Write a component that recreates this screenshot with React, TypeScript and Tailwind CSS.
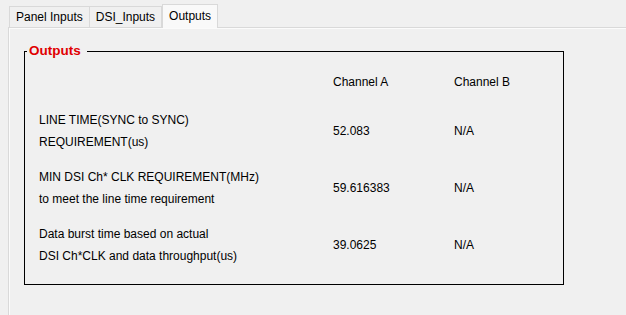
import React from "react";

const rows = [
  {
    label: ["LINE TIME(SYNC to SYNC)", "REQUIREMENT(us)"],
    a: "52.083",
    b: "N/A",
  },
  {
    label: ["MIN DSI Ch* CLK REQUIREMENT(MHz)", "to meet the line time requirement"],
    a: "59.616383",
    b: "N/A",
  },
  {
    label: ["Data burst time based on actual", "DSI Ch*CLK and data throughput(us)"],
    a: "39.0625",
    b: "N/A",
  },
];

export default function App() {
  return (
    <div
      className="w-[626px] h-[315px] overflow-hidden bg-[#f0f0f0] text-black text-[12px] flex flex-col"
      style={{ fontFamily: '"Liberation Sans", Arial, sans-serif' }}
    >
      {/* Tabs */}
      <div className="flex items-end pl-[9px] pt-[4px] h-[27px] shrink-0">
        <div className="h-[21px] px-[6px] flex items-center border border-b-0 border-[#d9d9d9] bg-[#f0f0f0]">
          Panel Inputs
        </div>
        <div className="h-[21px] px-[6px] flex items-center border border-b-0 border-l-0 border-[#d9d9d9] bg-[#f0f0f0]">
          DSI_Inputs
        </div>
        <div className="relative z-10 -mb-px h-[24px] px-[6px] pb-[2px] flex items-center border border-b-0 border-[#d9d9d9] bg-[#f9f9f9]">
          Outputs
        </div>
      </div>

      {/* Tab page */}
      <div className="flex-1 ml-[8px] border-t border-l border-[#d9d9d9]">
        <div className="h-full border-t border-l border-[#fbfbfb] pl-[14px] pt-[22px]">
          {/* Group box */}
          <div className="relative w-[540px] h-[234px] border border-black">
            <div className="absolute left-[2px] top-[-9px] pl-[2px] pr-[6px] bg-[#f0f0f0] text-[13.5px] font-bold text-[#e00000] leading-[16px]">
              Outputs
            </div>
            <div className="grid grid-cols-[294px_121px_1fr] pl-[14px] pt-[19px] leading-[22px]">
              <div />
              <div>Channel A</div>
              <div>Channel B</div>
            </div>
            <div className="flex flex-col gap-[13px] mt-[16px] pl-[14px] leading-[22px]">
              {rows.map((r) => (
                <div key={r.a} className="grid grid-cols-[294px_121px_1fr] items-center">
                  <div>
                    <div>{r.label[0]}</div>
                    <div>{r.label[1]}</div>
                  </div>
                  <div>{r.a}</div>
                  <div>{r.b}</div>
                </div>
              ))}
            </div>
          </div>
        </div>
      </div>
    </div>
  );
}
